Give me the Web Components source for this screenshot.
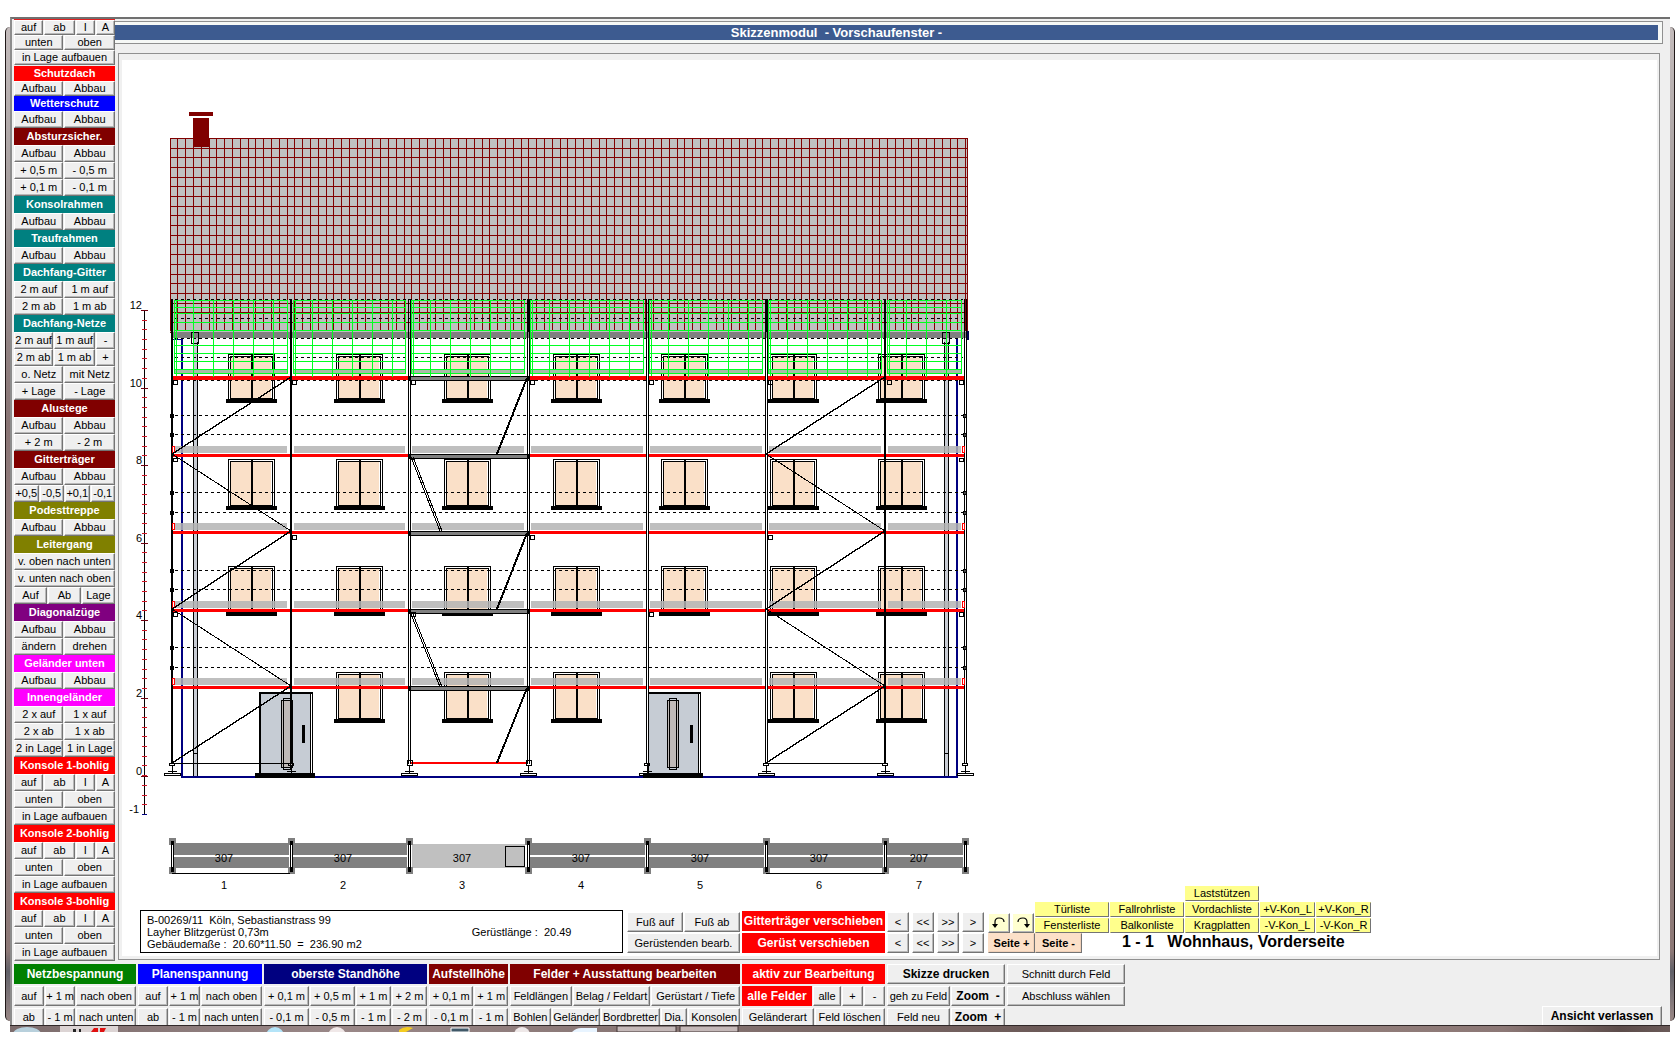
<!DOCTYPE html>
<html lang="de">
<head>
<meta charset="utf-8">
<title>Skizzenmodul - Vorschaufenster</title>
<style>
  html, body { margin: 0; background: #fff; }
  body { font-family: "Liberation Sans", Arial, sans-serif; font-size: 11px; color: #000; }
</style>
</head>
<body>
<sk-app></sk-app>

<template id="t-app">
  <style>
    :host { display: flex; padding: 17px 5px; box-sizing: border-box; }
    .edge { flex: 0 0 5px; margin: 10px 0 11px; box-sizing: border-box;
      background: linear-gradient(#c4bcbc, #a09898 20%, #887474 40%, #a08888 60%, #94807e 80%, #8c7876 93%, #606068 95%, #9a8886); }
    .edge.l { border-left: 1px solid #201818; border-radius: 5px 0 0 5px; }
    .edge.r { border-right: 1px solid #201818; border-radius: 0 5px 5px 0; }
    .win { flex: 1; min-width: 0; }
    .body { background: #efefef; border-top: 2px solid #707070; border-left: 2px solid #8c8c8c; padding-left: 2px; }
    .top { display: flex; }
    main { flex: 1; min-width: 0; display: flex; flex-direction: column; padding-top: 2px; }
  </style>
  <div class="edge l"></div>
  <div class="win">
    <div class="body">
      <div class="top">
        <sk-sidebar></sk-sidebar>
        <main>
          <sk-titlebar>Skizzenmodul  - Vorschaufenster -</sk-titlebar>
          <sk-stage></sk-stage>
        </main>
      </div>
      <sk-toolbar></sk-toolbar>
    </div>
    <sk-taskbar></sk-taskbar>
  </div>
  <div class="edge r"></div>
</template>

<template id="t-titlebar">
  <style>
    :host { display: block; border: 1px solid #909090; border-left: 0; padding: 3px 4px 3px 0; margin-right: 7px; background: #f6f8f6; }
    h1 { margin: 0; height: 15px; line-height: 15px; background: #3d5b90; color: #fff; font-size: 13px; font-weight: bold;
      text-align: center; white-space: pre; padding-right: 100px; }
  </style>
  <h1><slot></slot></h1>
</template>

<template id="t-button">
  <style>
    :host { display: block; min-width: 0; }
    button { display: flex; align-items: center; justify-content: center; width: 100%; height: 100%; box-sizing: border-box; margin: 0; padding: 0;
      font: inherit; line-height: 1; color: #000; white-space: pre; background: var(--face, #efefef); overflow: visible;
      border: 1px solid; border-color: var(--light, #fff) #747474 #747474 var(--light, #fff); border-radius: 0;
      box-shadow: inset -1px -1px var(--shade, #b8b8b8); }
    :host([big]) button { font-size: 12px; font-weight: bold; }
    :host([tone="yellow"]) { --face: #ffff8c; --light: #ffff8c; --shade: #ffff8c; }
    :host([tone="pale"]) { --face: #ffffd0; }
    :host([tone="peach"]) { --face: #fce0c8; --light: #fce0c8; --shade: #f0d0b8; }
    :host([cut]) button { border-bottom: 0; box-shadow: inset -1px 0 #b8b8b8; }
  </style>
  <button type="button"><slot></slot></button>
</template>

<template id="t-head">
  <style>
    :host { display: flex; align-items: center; justify-content: center; min-width: 0; background: var(--tone); color: #fff;
      font-weight: bold; white-space: pre; line-height: 1; }
  </style>
  <slot></slot>
</template>

<template id="t-row">
  <style>:host { display: grid; column-gap: 1px; }</style>
  <slot></slot>
</template>

<template id="t-sidebar">
  <style>
    :host { display: block; flex: 0 0 101px; border-top: 1px solid #e02020; }
    sk-head, sk-row { height: 17px; }
    .low { height: 15px; }
    .gap { margin-top: 1px; }
  </style>
</template>

<template id="t-toolbar">
  <style>
    :host { display: flex; gap: 2px; padding: 3px 8px 0 0; }
    .group { display: grid; grid-template-rows: 20px 20px 17px; row-gap: 2px; }
    .group sk-head { font-size: 12px; }
    .leave { margin-left: auto; align-self: end; width: 120px; height: 19px; }
  </style>
</template>

<template id="t-stage">
  <style>
    :host { display: block; flex: 1; margin: 9px 10px 1px 3px; box-sizing: border-box; border: 1px solid #909090; padding: 6px 2px 3px 3px; background: #f0f0f0; }
    .paper { background: #fff; height: 100%; }
    sk-drawing { display: block; }
    sk-controls { margin-top: -8px; }
  </style>
  <div class="paper">
    <sk-drawing></sk-drawing>
    <sk-controls></sk-controls>
  </div>
</template>

<template id="t-controls">
  <style>
    :host { display: flex; align-items: flex-end; padding: 0 0 3px 18px; }
    .info { box-sizing: border-box; width: 483px; height: 43px; border: 1px solid #000; padding: 3px 6px; display: flex; align-items: center; line-height: 12px; white-space: pre; }
    .info p { margin: 0; }
    .info p + p { margin-left: 110px; }
    .pair { display: grid; grid-template-rows: 20px 20px; row-gap: 1px; }
    .feet { width: 113px; margin-left: 4px; }
    .move { width: 143px; margin-left: 2px; font-size: 12px; row-gap: 2px; }
    .nav { grid-template-columns: repeat(4, 22px); column-gap: 3px; margin: 0 4px 0 2px; }
    .upper { display: flex; align-items: flex-end; }
    .turn { display: grid; grid-template-columns: 22px 22px; column-gap: 2px; height: 20px; }
    .lists { display: grid; grid-template-columns: repeat(3, 74px) 55px 55px; grid-template-rows: repeat(3, 15px); gap: 1px; margin-left: 1px; }
    .lists .single { grid-column: 3; }
    .lists .first { grid-column: 1; }
    .lower { display: flex; height: 20px; }
    .lower sk-button { width: 47px; font-weight: bold; }
    h2 { margin: 0 0 0 40px; font-size: 16px; line-height: 18px; white-space: pre; }
    svg { display: block; }
  </style>
  <div class="info">
    <p>B-00269/11  Köln, Sebastianstrass 99
Layher Blitzgerüst 0,73m
Gebäudemaße :  20.60*11.50  =  236.90 m2</p>
    <p>Gerüstlänge :  20.49</p>
  </div>
  <div class="pair feet">
    <sk-row cols="1 1"><sk-button>Fuß auf</sk-button><sk-button>Fuß ab</sk-button></sk-row>
    <sk-button>Gerüstenden bearb.</sk-button>
  </div>
  <div class="pair move">
    <sk-head style="--tone:#f00">Gitterträger verschieben</sk-head>
    <sk-head style="--tone:#f00">Gerüst verschieben</sk-head>
  </div>
  <div class="pair nav">
    <sk-button>&lt;</sk-button><sk-button>&lt;&lt;</sk-button><sk-button>&gt;&gt;</sk-button><sk-button>&gt;</sk-button>
    <sk-button>&lt;</sk-button><sk-button>&lt;&lt;</sk-button><sk-button>&gt;&gt;</sk-button><sk-button>&gt;</sk-button>
  </div>
  <div>
    <div class="upper">
      <div class="turn">
        <sk-button tone="pale"><svg width="14" height="14" viewBox="0 0 14 14" role="img" aria-label="links drehen"><path d="M3 10V6Q3 2 7 2Q12 2 12 6" fill="none" stroke="#000" stroke-width="1.2"/><path d="M0 8h6l-3 4z"/></svg></sk-button>
        <sk-button tone="pale"><svg width="14" height="14" viewBox="0 0 14 14" role="img" aria-label="rechts drehen"><path d="M11 10V6Q11 2 7 2Q2 2 2 6" fill="none" stroke="#000" stroke-width="1.2"/><path d="M8 8h6l-3 4z"/></svg></sk-button>
      </div>
      <div class="lists">
        <sk-button tone="yellow" class="single">Laststützen</sk-button>
        <sk-button tone="yellow" class="first">Türliste</sk-button><sk-button tone="yellow">Fallrohrliste</sk-button><sk-button tone="yellow">Vordachliste</sk-button><sk-button tone="yellow">+V-Kon_L</sk-button><sk-button tone="yellow">+V-Kon_R</sk-button>
        <sk-button tone="yellow" class="first">Fensterliste</sk-button><sk-button tone="yellow">Balkonliste</sk-button><sk-button tone="yellow">Kragplatten</sk-button><sk-button tone="yellow">-V-Kon_L</sk-button><sk-button tone="yellow">-V-Kon_R</sk-button>
      </div>
    </div>
    <div class="lower">
      <sk-button tone="peach">Seite +</sk-button><sk-button tone="peach">Seite -</sk-button>
      <h2>1 - 1   Wohnhaus, Vorderseite</h2>
    </div>
  </div>
</template>

<template id="t-taskbar">
  <style>
    :host { display: block; height: 7px; overflow: hidden; border-top: 1px solid #302828; box-sizing: border-box;
      background: linear-gradient(90deg, #7c6c6c, #9a8888 20%, #806e6c 45%, #6c5a58 62%, #94807c 75%, #8c7876 90%, #5c4c4a 97%, #6a5a58); }
    svg { display: block; }
  </style>
  <svg width="760" height="6" viewBox="10 0 760 6" aria-hidden="true">
    <ellipse cx="27" cy="8" rx="14" ry="7" fill="#b8d0dc"/>
    <path d="M60 6V0H118V6Z" fill="#dcd4d4"/>
    <path d="M73 3h3v3h-3zM79 3h2v3h-2z" fill="#222"/><path d="M91 6l3-4h4v4zM100 6V2h6l-2 4z" fill="#e01010"/>
    <circle cx="275" cy="10" r="9" fill="#b4e4f8"/><circle cx="337" cy="10" r="9" fill="#f0e8e8"/>
    <path d="M399 4q6-5 14-2l-7 4h-7z" fill="#f4cc20"/>
    <path d="M451 6V2H469V6Z" fill="#405868" stroke="#fff"/>
    <circle cx="522" cy="9" r="8" fill="#eee8e8"/><path d="M572 6q4-4 9-4h16v4z" fill="#e8f4ff"/>
    <path d="M617 6V0H676V6ZM680 6V0H738V6Z" fill="#c4b8b8" stroke="#403434"/>
  </svg>
</template>

<script>
const define = (name, tpl, setup) => customElements.define(name, class extends HTMLElement {
  constructor() {
    super();
    this.attachShadow({ mode: 'open' }).append(document.getElementById(tpl).content.cloneNode(true));
  }
  connectedCallback() {
    if (!this.ready && setup) setup(this, this.shadowRoot);
    this.ready = true;
  }
});

const tracks = cols => String(cols).split(' ').map(n => `minmax(0, ${n}fr)`).join(' ');

define('sk-button', 't-button');
define('sk-head', 't-head');
define('sk-titlebar', 't-titlebar');
define('sk-taskbar', 't-taskbar');
define('sk-row', 't-row', el => { el.style.gridTemplateColumns = tracks(el.getAttribute('cols') || '1'); });

/* Side palette: [title, colour, rows]; a row is "labels split by |" with column weights. */
const H = '49 50', K = '29 30 19 19';
const konsole = [['auf|ab|I|A', K], ['unten|oben', H], ['in Lage aufbauen', '1']];
const auf = ['Aufbau|Abbau', H];
const palette = [
  [null, null, konsole, true],
  ['Schutzdach', '#f00', [auf], true],
  ['Wetterschutz', '#00f', [auf]],
  ['Absturzsicher.', '#800000', [auf, ['+ 0,5 m|- 0,5 m', H], ['+ 0,1 m|- 0,1 m', H]]],
  ['Konsolrahmen', '#008080', [auf]],
  ['Traufrahmen', '#008080', [auf]],
  ['Dachfang-Gitter', '#008080', [['2 m auf|1 m auf', H], ['2 m ab|1 m ab', H]]],
  ['Dachfang-Netze', '#008080', [['2 m auf|1 m auf|-', '39 41 19'], ['2 m ab|1 m ab|+', '39 41 19'], ['o. Netz|mit Netz', H], ['+ Lage|- Lage', H]]],
  ['Alustege', '#800000', [auf, ['+ 2 m|- 2 m', H]]],
  ['Gitterträger', '#800000', [auf, ['+0,5|-0,5|+0,1|-0,1', '1 1 1 1']]],
  ['Podesttreppe', '#808000', [auf]],
  ['Leitergang', '#808000', [['v. oben nach unten', '1'], ['v. unten nach oben', '1'], ['Auf|Ab|Lage', '1 1 1']]],
  ['Diagonalzüge', '#800080', [auf, ['ändern|drehen', H]]],
  ['Geländer unten', '#f0f', [auf]],
  ['Innengeländer', '#f0f', [['2 x auf|1 x auf', H], ['2 x ab|1 x ab', H], ['2 in Lage|1 in Lage', H]]],
  ['Konsole 1-bohlig', '#f00', konsole],
  ['Konsole 2-bohlig', '#f00', konsole],
  ['Konsole 3-bohlig', '#f00', konsole]
];
define('sk-sidebar', 't-sidebar', (el, root) => {
  const html = palette.map(([title, tone, rows, low], i) => {
    const c = low ? 'low' : '';
    const head = title ? `<sk-head class="${low || title === 'Wetterschutz' ? 'low' : ''} ${i === 1 ? 'gap' : ''}" style="--tone:${tone}">${title}</sk-head>` : '';
    return head + rows.map(([labels, cols]) => `<sk-row class="${c}" cols="${cols}">` +
      labels.split('|').map(l => `<sk-button>${l}</sk-button>`).join('') + '</sk-row>').join('');
  }).join('');
  root.append(document.createRange().createContextualFragment(html));
});

/* Bottom toolbar groups: width, then three lines. "#" marks a coloured title, "*" a bold button. */
const groups = [
  [122, '#008000', '#Netzbespannung', ['auf|+ 1 m|nach oben', '30 31 60'], ['ab|- 1 m|nach unten', '30 31 60']],
  [124, '#0000ff', '#Planenspannung', ['auf|+ 1 m|nach oben', '30 31 61'], ['ab|- 1 m|nach unten', '30 31 61']],
  [163, '#000080', '#oberste Standhöhe', ['+ 0,1 m|+ 0,5 m|+ 1 m|+ 2 m', '45 45 35 35'], ['- 0,1 m|- 0,5 m|- 1 m|- 2 m', '45 45 35 35']],
  [79, '#800000', '#Aufstellhöhe', ['+ 0,1 m|+ 1 m', '45 34'], ['- 0,1 m|- 1 m', '45 34']],
  [230, '#800000', '#Felder + Ausstattung bearbeiten', ['Feldlängen|Belag / Feldart|Gerüstart / Tiefe', '62 78 89'], ['Bohlen|Geländer|Bordbretter|Dia.|Konsolen', '41 49 59 27 52']],
  [143, '#ff0000', '#aktiv zur Bearbeitung', ['#alle Felder|alle|+|-', '70 28 21 21'], ['Geländerart|Feld löschen', '71 70']],
  [118, '', '*Skizze drucken', ['geh zu Feld|*Zoom  -', '63 54'], ['Feld neu|*Zoom  +', '63 54']],
  [118, '', 'Schnitt durch Feld', ['Abschluss wählen', '1'], null]
];
define('sk-toolbar', 't-toolbar', (el, root) => {
  const cell = (l, tone, cut) => l[0] === '#' ? `<sk-head style="--tone:${tone}">${l.slice(1)}</sk-head>`
    : `<sk-button ${cut ? 'cut' : ''} ${l[0] === '*' ? 'big' : ''}>${l.replace('*', '')}</sk-button>`;
  const html = groups.map(([w, tone, head, ...rows]) => `<div class="group" style="width:${w}px">${cell(head, tone)}` +
    rows.map((r, i) => r ? `<sk-row cols="${r[1]}">${r[0].split('|').map(l => cell(l, tone, i === 1)).join('')}</sk-row>` : '').join('') +
    '</div>').join('') + '<sk-button class="leave" big cut>Ansicht verlassen</sk-button>';
  root.append(document.createRange().createContextualFragment(html));
});

/* Facade drawing with scaffold, height scale and plan strip. */
function facade() {
  const out = [];
  const R = (x, y, w, h, f = '#000') => out.push(`<rect x="${x}" y="${y}" width="${w}" height="${h}" fill="${f}"/>`);
  const B = (x, y, w, h, f = 'none', s = '#000') => out.push(`<rect x="${x + .5}" y="${y + .5}" width="${w - 1}" height="${h - 1}" fill="${f}" stroke="${s}"/>`);
  const L = (x1, y1, x2, y2, w = 1) => out.push(`<line x1="${x1}" y1="${y1}" x2="${x2}" y2="${y2}" stroke="#000" stroke-width="${w}"/>`);
  const D = (y, x1 = 175, x2 = 963) => out.push(`<line x1="${x1}" y1="${y + .5}" x2="${x2}" y2="${y + .5}" stroke="#000" stroke-dasharray="3 3"/>`);
  const T = (x, y, s, a = 'middle') => out.push(`<text x="${x}" y="${y}" text-anchor="${a}">${s}</text>`);
  const poles = [171, 290, 408, 527, 646, 765, 884, 964];
  const solid = [0, 1, 6];

  // roof with tiles and chimney
  R(170, 138, 798, 194, '#c0c0c0');
  for (let i = 0; i <= 102; i++) R(Math.round(169.5 + i * 7.8), 138, 1, 193, '#800000');
  for (let i = 0; i <= 20; i++) R(170, Math.round(138 + i * 9.68), 798, 1, '#800000');
  R(967, 138, 1, 200, '#800000');
  R(189, 112, 24, 4, '#800000'); R(193, 118, 16, 29, '#800000');
  R(171, 332, 797, 6, '#808080');
  R(966, 331, 3, 9, '#000050');

  // downpipes and walls
  for (const x of [193, 944]) {
    R(x, 338, 5, 438, '#c8ccd4'); R(x, 342, 1, 434); R(x + 4, 342, 1, 434); R(x, 753, 5, 1);
    B(x - 2, 332, 8, 12);
  }
  R(181, 339, 2, 438, '#000080'); R(956, 339, 2, 438, '#000080'); R(172, 339, 10, 1, '#000080');
  R(181, 776, 777, 2, '#000080');

  // windows
  const win = [228, 336, 444, 553, 661, 770, 878];
  [[354, 399], [459, 506], [566, 612], [672, 719]].forEach(([y, sill], r) => win.forEach((x, i) => {
    if (r === 3 && (i === 0 || i === 4)) return;
    const h = sill - y;
    B(x, y, 47, h + 1, '#fff'); R(x + 2, y + 3, 41, h - 4, '#fae0c8'); B(x + 2, y + 2, 43, h - 2);
    R(x + 24, y, 1, h); R(x + 23, y, 1, h); R(x - 2, sill, 51, 4);
  }));

  // doors
  for (const [x, p] of [[259, 281], [647, 667]]) {
    B(x, 692, 54, 82, '#fff'); R(x + 1, 693, 50, 80, '#c6ccd4'); R(x, 692, 54, 2); R(x, 692, 2, 82); R(x + 51, 692, 1, 82);
    B(p, 700, 12, 68, '#c0bab8'); B(p + 2, 698, 8, 72);
    R(x + 43, 725, 3, 18); R(x - 4, 773, 60, 5);
  }

  // toe boards and decks
  const ends = i => [poles[i] + 4, poles[i + 1] - 3];
  for (let i = 0; i < 7; i++) {
    const [a, b] = ends(i);
    for (const y of [446, 523, 601, 678]) out.push(`<rect x="${a}" y="${y}" width="${b - a}" height="7" fill="#b4b4b4" fill-opacity=".85"/>`);
    R(a, 369, b - a, 4, '#a8bca8');
  }
  for (const y of [454, 531, 609, 686]) { R(172, y, 237, 3, '#f00'); R(529, y, 437, 3, '#f00'); }
  R(172, 376, 237, 4, '#f00'); R(529, 376, 437, 4, '#f00');
  for (const y of [376, 454, 531, 609, 686]) B(408, y, 121, 5, '#808080');
  R(410, 762, 118, 2, '#f00');
  for (const y of [299, 318, 338, 357, 380, 415, 434, 492, 512, 570, 589, 647, 667]) D(y);

  // poles
  poles.forEach((x, i) => {
    if (solid.includes(i)) R(x, 299, 2, 465);
    else { R(x, 340, 3, 424, '#fff'); R(x, 299, 1, 465); R(x + 2, 299, 1, 465); }
  });
  R(527, 299, 2, 33); R(765, 299, 2, 33);
  for (const y of [376, 454, 531, 609, 686]) [2, 3].forEach(i => R(poles[i], y, 3, 5));

  // safety net
  const g = '#0f2';
  for (let i = 0; i < 7; i++) {
    const a = poles[i] + 3, b = poles[i + 1] - 2;
    for (const y of [300, 307, 313, 322, 330, 345, 353, 361, 369, 373]) R(a, y, b - a, 1, g);
    R(a, 300, 1, 74, g); R(a + 2, 300, 1, 76, g); R(b - 1, 300, 1, 74, g);
    for (let x = a + 19; x < b - 4; x += 20) R(x, 300, 1, 77, g);
  }

  // couplers, end guards
  for (const y of [415, 434, 492, 512, 570, 589, 647, 667]) { R(170, y - 1, 4, 4); B(963, y - 1, 4, 4, '#444'); }
  for (const y of [446, 523, 601, 678]) { B(172, y, 3, 7, 'none', '#f00'); B(962, y, 3, 7, 'none', '#f00'); }
  const knobs = { 380: [173, 292, 411, 530, 649, 768, 887, 959], 458: [173, 959], 535: [292, 530, 768], 612: [173, 411, 649, 959] };
  for (const y in knobs) for (const x of knobs[y]) B(x, +y, 5, y === '458' ? 4 : 5);

  // braces and ladders
  for (const [a, b] of [[172, 291], [766, 885]]) {
    L(a, 763, b, 686, 1.4); L(b, 686, a, 609); L(a, 609, b, 531, 1.4); L(b, 531, a, 454); L(a, 454, b, 377, 1.4);
    R(a, 763, b - a, 1);
  }
  L(497, 454, 527, 378, 2); L(497, 609, 527, 533, 2); L(497, 763, 527, 688, 2);
  L(411, 457, 440, 531); L(413, 457, 442, 531); L(411, 614, 440, 687); L(413, 614, 442, 687);

  // base jacks
  poles.forEach((p, i) => {
    const x = p + 1;
    if (i === 2 || i === 3) B(x - 2, 760, 6, 6); else B(x - 3, 763, 6, 3);
    R(x, 765, 1, 8); R(x - 4, 771, 9, 1);
    if (i !== 1) B(x - 8, 773, 17, 3, i === 4 ? 'none' : '#fff');
  });

  // height scale
  R(144, 310, 1, 504);
  for (let i = 0; i <= 52; i++) R(142, Math.round(310 + i * 9.69), 5, 1, '#d01828');
  for (let i = 0; i <= 6; i++) {
    const y = Math.round(310 + i * 77.6);
    R(141, y, 7, 1, '#700010'); T(142, y - 1, 12 - 2 * i, 'end');
  }
  R(142, 814, 5, 1, '#000080'); T(139, 813, '-1', 'end');

  // plan strip
  for (let i = 0; i < 7; i++) {
    const a = poles[i] + 3, b = poles[i + 1] - 1, lab = i === 6 ? 919 : 224 + i * 119;
    if (i === 2) { R(a + 1, 844, b - a - 2, 24, '#c0c0c0'); B(505, 846, 20, 21); }
    else { R(a, 843, b - a, 25, '#808080'); R(a, 855, b - a, 2, '#fff'); }
    T(lab, 862, i === 6 ? 207 : 307); T(lab, 889, i + 1);
  }
  for (const p of poles) {
    R(p - 2, 838, 7, 7, '#808080'); R(p - 2, 867, 7, 7, '#808080');
    R(p, 841, 3, 31); R(p + 1, 845, 1, 22, '#fff');
  }
  R(172, 873, 118, 1); R(766, 873, 119, 1);
  return out.join('');
}
customElements.define('sk-drawing', class extends HTMLElement {
  constructor() {
    super();
    this.attachShadow({ mode: 'open' }).innerHTML = `<style>
      :host { display: block; }
      svg { display: block; shape-rendering: crispEdges; }
      text { font-size: 11px; fill: #000; }
    </style><svg width="900" height="834" viewBox="122 60 900 834" role="img" aria-label="Gerüstansicht">${facade()}</svg>`;
  }
});
define('sk-controls', 't-controls');
define('sk-stage', 't-stage');
define('sk-app', 't-app');
</script>
</body>
</html>
